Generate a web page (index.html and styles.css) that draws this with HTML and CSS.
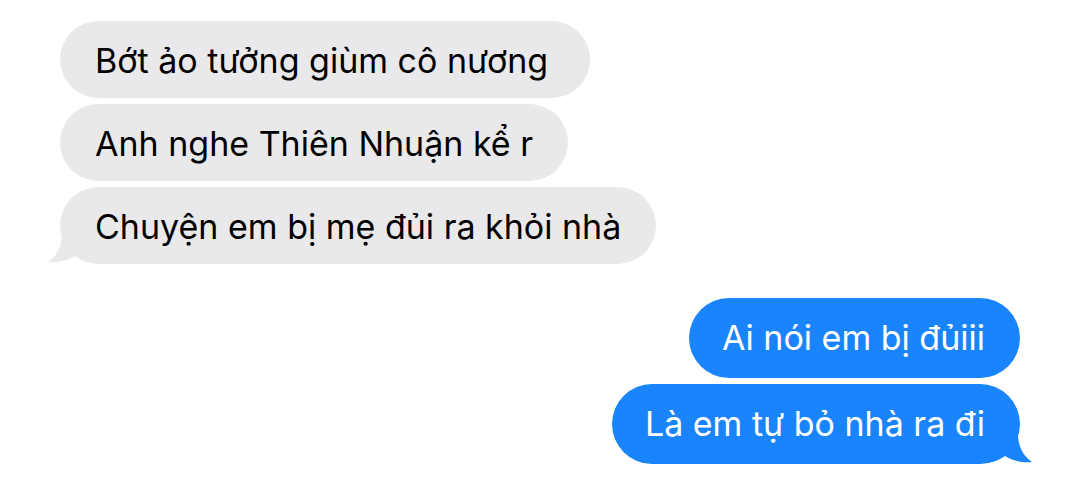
FILE: index.html
```html
<!DOCTYPE html>
<html lang="vi">
<head>
  <meta charset="UTF-8">
  <meta name="viewport" content="width=device-width, initial-scale=1.0">
  <title>Tin nhắn</title>
  <link rel="stylesheet" href="styles.css">
</head>
<body>
  <div class="thread">
    <div class="group received">
      <div class="bubble">Bớt ảo tưởng giùm cô nương</div>
      <div class="bubble">Anh nghe Thiên Nhuận kể r</div>
      <div class="bubble last">
        Chuyện em bị mẹ đủi ra khỏi nhà
        <svg class="tail" width="40" height="30" viewBox="0 0 40 30">
          <path d="M14 0 C14 12 9 22 0 28 C9 29 19 27 27 22 C31 25 36 27 40 28 L40 0 Z" fill="#e9e9eb"/>
        </svg>
      </div>
    </div>
    <div class="group sent">
      <div class="bubble">Ai nói em bị đủiii</div>
      <div class="bubble last">
        Là em tự bỏ nhà ra đi
        <svg class="tail" width="40" height="30" viewBox="0 0 40 30">
          <path d="M26 0 C26 12 31 22 40 28 C31 29 21 27 13 22 C9 25 4 27 0 28 L0 0 Z" fill="#1a84fc"/>
        </svg>
      </div>
    </div>
  </div>
</body>
</html>
```

FILE: styles.css
```css
body, html {
  margin: 0;
  padding: 0;
  background: #fff;
}
.thread {
  display: flex;
  flex-direction: column;
  gap: 34px;
  padding: 21px 60px 0 60px;
  font-family: "Inter", "Noto Sans", sans-serif;
}
.group {
  display: flex;
  flex-direction: column;
  gap: 6px;
}
.received {
  align-items: flex-start;
}
.sent {
  align-items: flex-end;
}
.bubble {
  position: relative;
  height: 77px;
  line-height: 79px;
  padding: 0 35px;
  border-radius: 39px;
  font-size: 34px;
  white-space: nowrap;
}
.received .bubble {
  background: #e9e9eb;
  color: #000;
}
.received .bubble:first-child {
  padding-right: 42px;
}
.sent .bubble {
  height: 80px;
  line-height: 80px;
  border-radius: 40px;
  padding: 0 35px 0 33px;
  background: #1a84fc;
  color: #fff;
}
.tail {
  position: absolute;
  bottom: 0;
}
.received .tail {
  left: -12px;
}
.sent .tail {
  right: -12px;
}
```
